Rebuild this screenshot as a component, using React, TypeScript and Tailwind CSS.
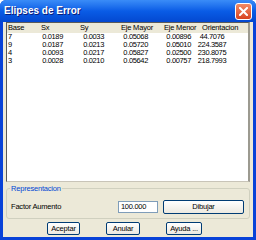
import React from "react";

const rows = [
  ["7", "0.0189", "0.0033", "0.05068", "0.00896", "44.7076"],
  ["9", "0.0187", "0.0213", "0.05720", "0.05010", "224.3587"],
  ["4", "0.0093", "0.0217", "0.05827", "0.02500", "230.8075"],
  ["3", "0.0028", "0.0210", "0.05642", "0.00757", "218.7993"],
];

const cols = "grid grid-cols-[24px_32px_41px_44px_43px_42px_1fr]";

function Btn({ children, className = "" }: { children: React.ReactNode; className?: string }) {
  return (
    <div
      className={
        "flex items-center justify-center whitespace-nowrap rounded-[2px] border border-[#003c74] bg-gradient-to-b from-white to-[#ece9e0] text-[7.5px] tracking-[-0.2px] text-black " +
        className
      }
    >
      {children}
    </div>
  );
}

export default function App() {
  return (
    <div
      className="w-[256px] h-[240px] flex flex-col bg-[#0842d8] rounded-t-[6px] overflow-hidden"
      style={{ fontFamily: '"Liberation Sans", Arial, sans-serif' }}
    >
      <div className="h-[22px] flex items-center justify-between pl-[4px] pr-[4px] bg-gradient-to-b from-[#3a8cf7] via-[#0a5ce6] to-[#0448d0]">
        <span className="text-white font-bold text-[10px] leading-none [text-shadow:1px_1px_0_#0a1e7a]">Elipses de Error</span>
        <div className="w-[17px] h-[17px] rounded-[3px] border border-white bg-gradient-to-b from-[#f08a66] to-[#d8401c] flex items-center justify-center">
          <svg width="9" height="9" viewBox="0 0 9 9">
            <path d="M1 1 L8 8 M8 1 L1 8" stroke="white" strokeWidth="2" strokeLinecap="square" />
          </svg>
        </div>
      </div>
      <div className="flex-1 mx-[3px] mb-[3px] bg-[#ece9d8] flex flex-col px-[3px]">
        <div className="flex flex-col h-[160px] border-l border-t border-[#5a5a5a] border-r-[2px] border-r-[#9c9a90] border-b border-b-[#c8c4b8] bg-white">
          <div className={cols + " h-[10px] bg-[#ece9d8] text-[7.5px] leading-[10px] tracking-[-0.2px] text-black whitespace-nowrap"}>
            <span className="pl-[1px]">Base</span>
            <span className="pl-[10px]">Sx</span>
            <span className="pl-[17px]">Sy</span>
            <span className="pl-[17px]">Eje Mayor</span>
            <span className="pl-[16px]">Eje Menor</span>
            <span className="pl-[11px] col-span-2">Orientacion</span>
          </div>
          <div className="flex flex-col text-[7.5px] leading-[8px] tracking-[-0.35px] text-black whitespace-nowrap">
            {rows.map((r) => (
              <div key={r[0]} className={cols}>
                <span className="pl-[1px]">{r[0]}</span>
                <span className="text-right">{r[1]}</span>
                <span className="text-right">{r[2]}</span>
                <span className="text-right">{r[3]}</span>
                <span className="text-right">{r[4]}</span>
                <span className="text-center">{r[5]}</span>
                <span />
              </div>
            ))}
          </div>
        </div>
        <div className="mt-[6px] relative h-[31px] border border-[#d0d0bf] rounded-[3px]">
          <span className="absolute -top-[5px] left-[3px] bg-[#ece9d8] px-[1px] text-[7.5px] leading-[9px] tracking-[-0.2px] text-[#0046d5] whitespace-nowrap">
            Representacion
          </span>
          <div className="flex items-center h-full pt-[6px] pl-[4px] pr-[4px]">
            <span className="text-[7.5px] tracking-[-0.2px] text-black w-[107px] whitespace-nowrap">Factor Aumento</span>
            <div className="w-[40px] h-[12px] border border-[#7f9db9] bg-white text-[7.5px] leading-[10px] tracking-[-0.3px] pl-[2px]">100.000</div>
            <Btn className="ml-[5px] w-[81px] h-[14px]">Dibujar</Btn>
          </div>
        </div>
        <div className="flex items-center mt-[3px] pl-[41px] gap-[26px]">
          <Btn className="w-[33px] h-[13px]">Aceptar</Btn>
          <Btn className="w-[34px] h-[13px]">Anular</Btn>
          <Btn className="w-[36px] h-[13px]">Ayuda ...</Btn>
        </div>
      </div>
    </div>
  );
}
